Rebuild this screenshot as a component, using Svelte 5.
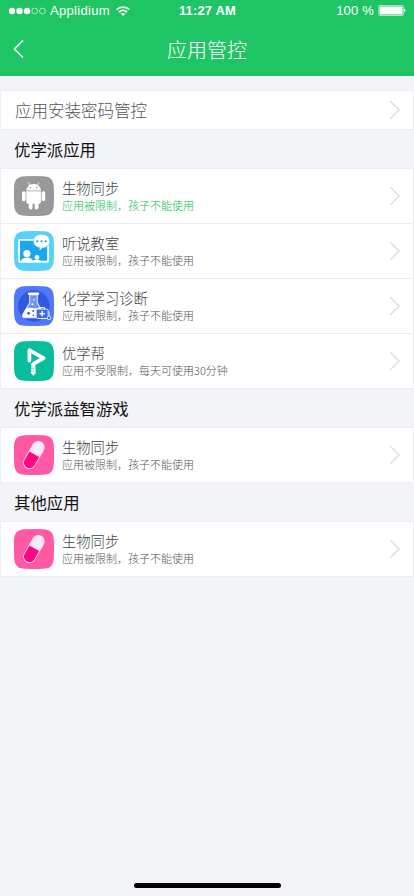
<script lang="ts">
	type App = { name: string; icon: string; status: string; active?: boolean };

	const limited = '应用被限制\uff0c孩子不能使用';

	const groups: { title: string; apps: App[] }[] = [
		{
			title: '优学派应用',
			apps: [
				{ name: '生物同步', icon: 'android', status: limited, active: true },
				{ name: '听说教室', icon: 'classroom', status: limited },
				{ name: '化学学习诊断', icon: 'chemistry', status: limited },
				{ name: '优学帮', icon: 'helper', status: '应用不受限制\uff0c每天可使用30分钟' }
			]
		},
		{ title: '优学派益智游戏', apps: [{ name: '生物同步', icon: 'pill', status: limited }] },
		{ title: '其他应用', apps: [{ name: '生物同步', icon: 'pill', status: limited }] }
	];

	const colors: Record<string, string> = {
		android: '#999999',
		classroom: '#54d1fd',
		chemistry: '#4f78fa',
		helper: '#07bd9b',
		pill: '#ff59a6'
	};
</script>

{#snippet chevron()}
	<svg class="chevron" width="12" height="20" viewBox="0 0 12 20">
		<path d="M1.3 1.3 10 10 1.3 18.7" fill="none" stroke="#dcdfe7" stroke-width="1.5" />
	</svg>
{/snippet}

{#snippet appIcon(icon: string)}
	<svg class="app-icon" width="40" height="40" viewBox="0 0 40 40">
		<path
			d="M0 20V12C0 3.5 3.5 .6 11 .2Q20-.2 29 .2C36.5 .6 39.4 3.5 39.8 11Q40.2 20 39.8 29C39.4 36.5 36.5 39.4 29 39.8Q20 40.2 11 39.8C3.5 39.4 .6 36.5 .2 29Q0 24 0 20Z"
			fill={colors[icon]}
		/>
		{#if icon === 'android'}
			<g fill="#fff">
				<path d="M12.3 14.6c.2-3.7 3-6.6 7.3-6.6s7.1 2.9 7.3 6.6Z" />
				<path d="m15.8 9.2-1.3-2.5M23.4 9.2l1.3-2.5" stroke="#fff" stroke-width=".8" stroke-linecap="round" />
				<path d="M12.3 15.3h14.6v10.8c0 1-.6 1.6-1.6 1.6H13.9c-1 0-1.6-.6-1.6-1.6Z" />
				<rect x="8" y="15.2" width="3.6" height="10" rx="1.8" />
				<rect x="27.6" y="15.2" width="3.6" height="10" rx="1.8" />
				<rect x="14.7" y="25" width="3.8" height="8.5" rx="1.9" />
				<rect x="20.7" y="25" width="3.8" height="8.5" rx="1.9" />
			</g>
			<circle cx="16.5" cy="11.6" r=".8" fill="#999" />
			<circle cx="22.7" cy="11.6" r=".8" fill="#999" />
		{:else if icon === 'classroom'}
			<rect x="5.1" y="8.9" width="29" height="21.9" rx="1" fill="#19a8ef" stroke="#fff" stroke-width="1.9" />
			<g fill="#fff">
				<circle cx="12.9" cy="22.5" r="3.6" />
				<path d="M6.8 31c.4-3.1 2.6-4.6 6.2-4.6s5.9 1.5 6.2 4.6Z" />
				<circle cx="22.9" cy="26.2" r="2.3" />
				<path d="M18.8 31c.3-1.8 1.8-2.5 4.1-2.5s3.8.7 4.2 2.5Z" />
				<path
					d="M27.5 3.2c4.8 0 8.5 2.9 8.5 6.8s-3.6 6.8-7.7 6.9l-2.5 2.7-.3-3c-3.7-.7-6.3-3.3-6.3-6.6 0-3.9 3.6-6.8 8.3-6.8Z"
					stroke="#43c5f7"
					stroke-width=".7"
				/>
			</g>
			<g fill="#19a8ef">
				<circle cx="23.4" cy="10.3" r="1.15" />
				<circle cx="27.5" cy="10.3" r="1.15" />
				<circle cx="31.6" cy="10.3" r="1.15" />
			</g>
		{:else if icon === 'chemistry'}
			<circle cx="19.8" cy="20" r="15.7" fill="#3158df" />
			<path
				d="M15.7 8.6h7.6v8.2l6.3 11.1c1.2 2.3.3 3.9-2.3 3.9H11.4c-2.7 0-3.5-1.6-2.3-3.9l6.6-11.1Z"
				fill="#7191f2"
				stroke="#d9e5ff"
				stroke-width="1.1"
			/>
			<path d="M12.6 21.8c4-.8 7.3 1.5 13.8-.1l3.2 6.1c1.2 2.3.3 3.7-2.3 3.7H11.4c-2.7 0-3.4-1.5-2.3-3.7Z" fill="#fff" />
			<rect x="13.8" y="6.5" width="11.4" height="2.4" rx="1.2" fill="#fff" />
			<g fill="#3158df">
				<circle cx="14.6" cy="27.3" r="1.4" />
				<circle cx="19.2" cy="25" r=".9" />
				<circle cx="19.4" cy="29.2" r=".8" />
			</g>
			<circle cx="18.4" cy="18.3" r="1" fill="#fff" />
			<circle cx="20" cy="13.8" r=".8" fill="#fff" />
			<path d="M25.2 23v-1.4h5.2V23" fill="none" stroke="#fff" stroke-width="1" />
			<rect x="22.2" y="23.1" width="12" height="9.4" rx="1.5" fill="#3d68e9" stroke="#e2eaff" stroke-width="1" />
			<path d="M28.2 25.1v5.2m-2.6-2.6h5.2" stroke="#fff" stroke-width="1.5" />
			<path d="M34.2 25.5c2.4 1 .9 3 1 4.4" fill="none" stroke="#e2eaff" stroke-width=".8" />
			<circle cx="35" cy="31.9" r="1.8" fill="#3d68e9" stroke="#e2eaff" stroke-width=".9" />
		{:else if icon === 'helper'}
			<path d="M15.4 19.6V9.2l14.2 7.9-10.2 5.8" fill="none" stroke="#fff" stroke-width="3.7" stroke-linejoin="round" stroke-linecap="round" />
			<path d="M17.3 22.5h4v5.3l.5.5v1.1l-.5.4v.7l.5.4v1.2l-2.5 2.6-2.5-2.6v-1.2l.5-.4v-.7l-.5-.4v-1.1l.5-.5Z" fill="#fff" />
			<path d="M16.8 27.7h3.5M16.8 30h3.5" stroke="#07bd9b" stroke-width=".5" />
		{:else}
			<g transform="rotate(30 19.9 20)">
				<rect x="13.5" y="4.8" width="12.8" height="30.4" rx="6.4" fill="#ffe9f4" />
				<path d="M14.3 19.2h11.2v9.6a5.6 5.6 0 0 1-11.2 0Z" fill="#ff0780" />
			</g>
		{/if}
	</svg>
{/snippet}

<div class="screen">
	<header>
		<div class="status-bar">
			<div class="carrier">
				<svg width="38" height="8" viewBox="0 0 38 8">
					<g fill="#fff">
						<circle cx="4" cy="4" r="3.2" />
						<circle cx="11.5" cy="4" r="3.2" />
						<circle cx="19" cy="4" r="3.2" />
					</g>
					<g fill="none" stroke="#fff" stroke-width=".6">
						<circle cx="26.7" cy="4" r="2.9" />
						<circle cx="34.4" cy="4" r="2.9" />
					</g>
				</svg>
				<span>Applidium</span>
				<svg class="wifi" width="14" height="10" viewBox="0 0 14 10">
					<g fill="none" stroke="#fff" stroke-width="1.7">
						<path d="M.6 3.7c3.7-3.5 9.1-3.5 12.8 0" />
						<path d="M2.9 6.1c2.4-2.3 5.8-2.3 8.2 0" />
					</g>
					<path d="M4.7 7.7c1.4-1.2 3.2-1.2 4.6 0L7 10Z" fill="#fff" />
				</svg>
			</div>
			<span class="time">11:27 AM</span>
			<div class="power">
				<span>100 %</span>
				<svg width="28" height="11" viewBox="0 0 28 11">
					<rect x=".8" y=".5" width="24.6" height="10" rx="1.2" fill="none" stroke="#fff" stroke-width=".6" />
					<rect x="1.6" y="1.4" width="23" height="8.2" rx=".5" fill="#fff" />
					<path d="M26.2 3.6c1.7.5 1.7 3.3 0 3.8Z" fill="#fff" />
				</svg>
			</div>
		</div>
		<div class="nav">
			<svg class="back" width="12" height="20" viewBox="0 0 12 20">
				<path d="M10 1.4 1.5 10 10 18.6" fill="none" stroke="#fff" stroke-width="1.5" />
			</svg>
			<h1>应用管控</h1>
		</div>
	</header>

	<main>
		<div class="row password">
			<span>应用安装密码管控</span>
			{@render chevron()}
		</div>

		{#each groups as group}
			<section>
				<h2>{group.title}</h2>
				{#each group.apps as app}
					<div class="row">
						{@render appIcon(app.icon)}
						<div class="info">
							<span class="name">{app.name}</span>
							<span class="status" class:active={app.active}>{app.status}</span>
						</div>
						{@render chevron()}
					</div>
				{/each}
			</section>
		{/each}
	</main>

	<footer><div class="home-bar"></div></footer>
</div>

<style>
	:global(body) {
		background: #f3f4f7;
	}
	.screen {
		display: flex;
		flex-direction: column;
		height: 896px;
		overflow: hidden;
		background: #f3f4f7;
		font-family: 'Noto Sans CJK SC', sans-serif;
		font-weight: 300;
	}
	svg {
		display: block;
		flex: none;
	}
	header {
		height: 76px;
		background: #1fc564;
		color: #fff;
	}
	.status-bar {
		display: grid;
		grid-template-columns: 1fr auto 1fr;
		align-items: center;
		height: 21px;
		padding: 0 8px;
		font-family: 'Liberation Sans', sans-serif;
		font-size: 13px;
	}
	.carrier,
	.power {
		display: flex;
		align-items: center;
	}
	.carrier span {
		margin-left: 4px;
		letter-spacing: 0.3px;
	}
	.wifi {
		margin-left: 6px;
	}
	.time {
		margin-left: 1px;
		font-weight: bold;
		letter-spacing: 0.15px;
	}
	.power {
		justify-content: flex-end;
		gap: 4px;
	}
	.power span {
		letter-spacing: 0.2px;
	}
	.nav {
		display: grid;
		grid-template-columns: 1fr auto 1fr;
		align-items: center;
		height: 56px;
		padding: 0 13px;
	}
	h1 {
		margin: 0;
		padding-top: 2px;
		font-size: 20px;
		font-weight: 300;
		line-height: 30px;
	}
	main {
		flex: 1;
		padding-top: 14px;
	}
	.row {
		display: flex;
		align-items: center;
		box-sizing: border-box;
		height: 55px;
		padding: 0 12px 0 13px;
		background: #fff;
		border: 1px solid #eceef1;
		border-top: none;
	}
	.password {
		height: 40px;
		padding-left: 14px;
		color: #555;
		font-size: 16.5px;
		line-height: 24px;
		border-top: 1px solid #eceef1;
	}
	.chevron {
		margin-left: auto;
	}
	h2 {
		box-sizing: border-box;
		height: 39px;
		margin: 0;
		padding-left: 14px;
		color: #111;
		font-size: 16.4px;
		font-weight: 400;
		line-height: 39px;
		border-bottom: 1px solid #eceef1;
	}
	.info {
		display: flex;
		flex-direction: column;
		margin-left: 8px;
	}
	.name {
		color: #444;
		font-size: 14.3px;
		line-height: 19px;
	}
	.status {
		color: #555;
		font-size: 11px;
		line-height: 17px;
	}
	.active {
		color: #0cbd54;
	}
	footer {
		display: flex;
		justify-content: center;
		padding-bottom: 8px;
	}
	.home-bar {
		width: 147px;
		height: 5px;
		border-radius: 3px;
		background: #000;
	}
</style>
